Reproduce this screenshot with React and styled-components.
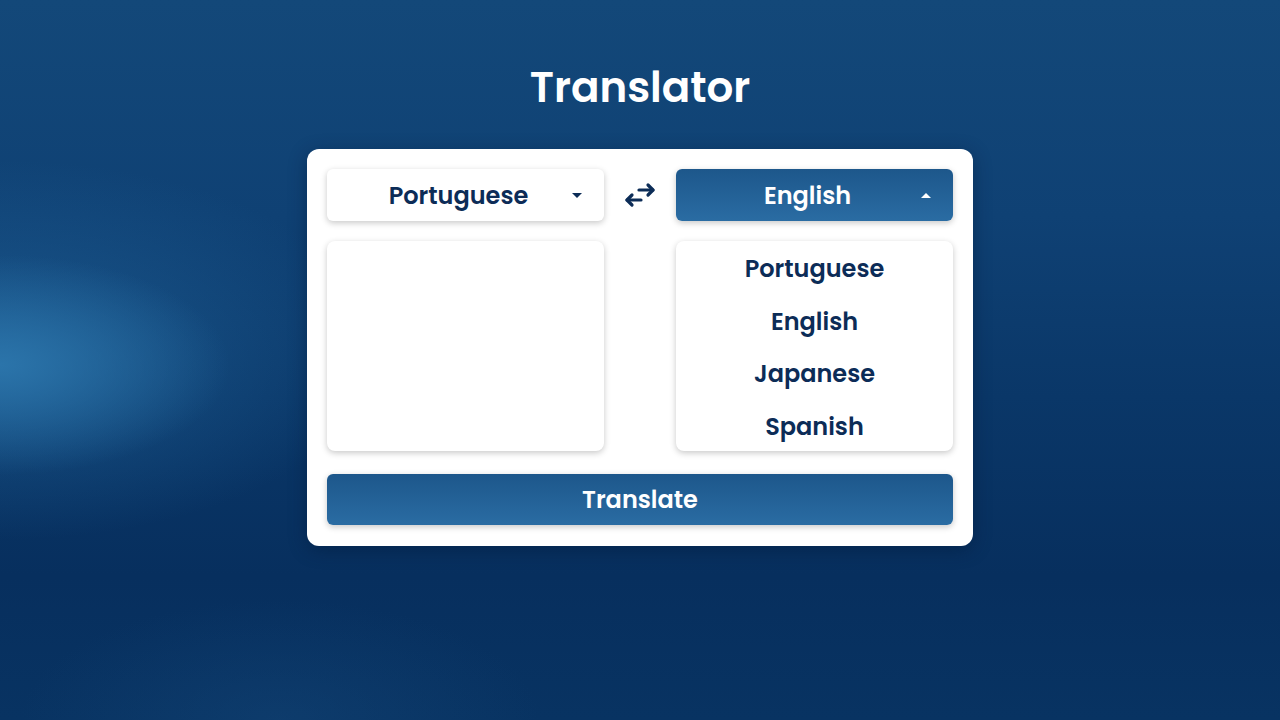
import React, { useState } from 'react';
import styled, { createGlobalStyle } from 'styled-components';

const GlobalStyle = createGlobalStyle`
  * { box-sizing: border-box; }
  html, body { margin: 0; padding: 0; height: 100%; }
  body {
    font-family: 'Poppins', 'Inter', 'Noto Sans', sans-serif;
    background-color: #0a3768;
  }
  #root { height: 100%; }
`;

const Page = styled.div`
  min-height: 100vh;
  display: flex;
  flex-direction: column;
  align-items: center;
  background:
    radial-gradient(ellipse 230px 110px at 0px 365px, rgba(44, 118, 172, 0.95), rgba(44, 118, 172, 0) 100%),
    radial-gradient(ellipse 380px 190px at 0px 350px, rgba(30, 94, 148, 0.8), rgba(30, 94, 148, 0) 100%),
    radial-gradient(ellipse 260px 120px at 280px 720px, rgba(20, 70, 120, 0.45), rgba(20, 70, 120, 0) 100%),
    linear-gradient(180deg, #134879 0%, #0f4174 30%, #0a3768 55%, #072f5e 80%, #083362 100%);
`;

const Title = styled.h1`
  margin: 62px 0 0;
  font-size: 42px;
  line-height: 52px;
  font-weight: 600;
  color: #ffffff;
`;

const Card = styled.div`
  margin-top: 35px;
  width: 666px;
  background: #ffffff;
  border-radius: 12px;
  padding: 20px 20px 21px;
  display: flex;
  flex-direction: column;
  gap: 20px;
  box-shadow: 0 4px 18px rgba(2, 24, 56, 0.45);
`;

const Row = styled.div`
  display: grid;
  grid-template-columns: 277px 1fr 277px;
  align-items: stretch;
`;

const Select = styled.div`
  height: 52px;
  border-radius: 6px;
  display: flex;
  align-items: center;
  padding-right: 22px;
  background: ${p => (p.$active ? 'linear-gradient(180deg, #1d578b 0%, #2a6ca3 100%)' : '#ffffff')};
  color: ${p => (p.$active ? '#ffffff' : '#0c2c57')};
  box-shadow: 0 2px 6px rgba(0, 0, 0, 0.22);
  cursor: pointer;
`;

const SelectLabel = styled.span`
  flex: 1;
  text-align: center;
  font-size: 24px;
  font-weight: 600;
  padding-left: 18px;
`;

const Caret = styled.span`
  width: 0;
  height: 0;
  border-left: 5px solid transparent;
  border-right: 5px solid transparent;
  ${p => (p.$up ? 'border-bottom: 5px solid #ffffff;' : 'border-top: 5px solid #0c2c57;')}
`;

const Swap = styled.button`
  border: none;
  background: none;
  padding: 0;
  display: flex;
  align-items: center;
  justify-content: center;
  color: #0c2c57;
  cursor: pointer;
`;

const TextBox = styled.textarea`
  height: 210px;
  border: none;
  border-radius: 8px;
  resize: none;
  padding: 14px;
  font-family: inherit;
  font-size: 18px;
  color: #0c2c57;
  box-shadow: 0 2px 6px rgba(0, 0, 0, 0.22);
  outline: none;
`;

const Menu = styled.ul`
  list-style: none;
  margin: 0;
  padding: 2px 0 0;
  height: 210px;
  border-radius: 8px;
  background: #ffffff;
  box-shadow: 0 2px 6px rgba(0, 0, 0, 0.22);
  display: flex;
  flex-direction: column;
`;

const MenuItem = styled.li`
  text-align: center;
  font-size: 24px;
  font-weight: 600;
  color: #0c2c57;
  line-height: 52.5px;
  cursor: pointer;
`;

const TranslateButton = styled.button`
  margin-top: 3px;
  height: 51px;
  border: none;
  border-radius: 6px;
  background: linear-gradient(180deg, #1d578b 0%, #2a6ca3 100%);
  color: #ffffff;
  font-family: inherit;
  font-size: 24px;
  font-weight: 600;
  box-shadow: 0 2px 6px rgba(0, 0, 0, 0.22);
  cursor: pointer;
`;

const SwapIcon = () => (
  <svg width="34" height="28" viewBox="0 0 34 28" fill="none" stroke="currentColor" strokeWidth="3.2" strokeLinecap="round" strokeLinejoin="round">
    <path d="M16 9h14" />
    <path d="M25 4l5 5-5 5" />
    <path d="M4 19h14" />
    <path d="M9 14l-5 5 5 5" />
  </svg>
);

const languages = ['Portuguese', 'English', 'Japanese', 'Spanish'];

export default function App() {
  const [from, setFrom] = useState('Portuguese');
  const [to, setTo] = useState('English');

  return (
    <>
      <GlobalStyle />
      <Page>
        <Title>Translator</Title>
        <Card>
          <Row>
            <Select>
              <SelectLabel>{from}</SelectLabel>
              <Caret />
            </Select>
            <Swap onClick={() => { setFrom(to); setTo(from); }}>
              <SwapIcon />
            </Swap>
            <Select $active>
              <SelectLabel>{to}</SelectLabel>
              <Caret $up />
            </Select>
          </Row>
          <Row>
            <TextBox />
            <div />
            <Menu>
              {languages.map(lang => (
                <MenuItem key={lang} onClick={() => setTo(lang)}>{lang}</MenuItem>
              ))}
            </Menu>
          </Row>
          <TranslateButton>Translate</TranslateButton>
        </Card>
      </Page>
    </>
  );
}
